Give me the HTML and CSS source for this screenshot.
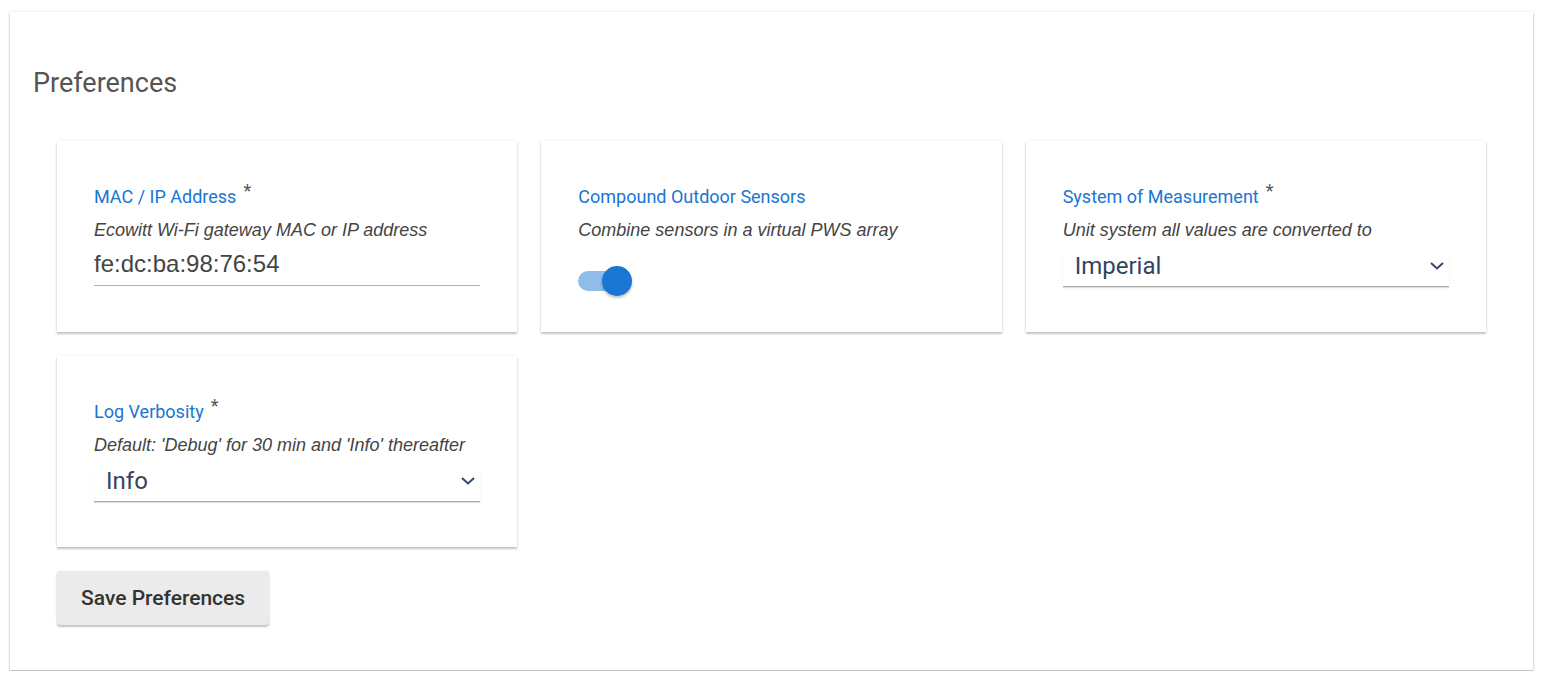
FILE: index.html
```html
<!DOCTYPE html>
<html lang="en">
<head>
<meta charset="utf-8">
<title>Preferences</title>
<link rel="stylesheet" href="styles.css">
</head>
<body>
<div class="panel">
  <h1 class="title">Preferences</h1>
  <div class="grid">
    <div class="card">
      <div class="label">MAC / IP Address<span class="req">*</span></div>
      <div class="desc">Ecowitt Wi-Fi gateway MAC or IP address</div>
      <div class="input">fe:dc:ba:98:76:54</div>
    </div>
    <div class="card">
      <div class="label">Compound Outdoor Sensors</div>
      <div class="desc">Combine sensors in a virtual PWS array</div>
      <div class="toggle"><span class="track"></span><span class="thumb"></span></div>
    </div>
    <div class="card">
      <div class="label">System of Measurement<span class="req">*</span></div>
      <div class="desc">Unit system all values are converted to</div>
      <div class="select"><span class="value">Imperial</span>
        <svg class="chev" width="16" height="10" viewBox="0 0 16 10"><path d="M2 2 L8 7.5 L14 2" fill="none" stroke="#34466a" stroke-width="2"/></svg>
      </div>
    </div>
    <div class="card">
      <div class="label">Log Verbosity<span class="req">*</span></div>
      <div class="desc">Default: 'Debug' for 30 min and 'Info' thereafter</div>
      <div class="select"><span class="value">Info</span>
        <svg class="chev" width="16" height="10" viewBox="0 0 16 10"><path d="M2 2 L8 7.5 L14 2" fill="none" stroke="#34466a" stroke-width="2"/></svg>
      </div>
    </div>
  </div>
  <button class="btn">Save Preferences</button>
</div>
</body>
</html>
```

FILE: styles.css
```css
html, body {
  margin: 0;
  padding: 0;
  background: #ffffff;
}
body {
  padding: 12px 13px 0 10px;
  font-family: Roboto, "Liberation Sans", Arial, sans-serif;
}
.panel {
  background: #fff;
  padding: 56px 23px 45px 23px;
  border-bottom: 1px solid #c4c4c4;
  box-shadow: 0 2px 2px rgba(0,0,0,0.25), 0 0 3px rgba(0,0,0,0.12);
}
.title {
  margin: 0 0 43px 0;
  font-family: Roboto, sans-serif;
  font-weight: 400;
  font-size: 27px;
  line-height: 30px;
  color: #555555;
}
.grid {
  margin: 0 24px;
  display: grid;
  grid-template-columns: repeat(3, 1fr);
  gap: 24px;
}
.card {
  background: #fff;
  padding: 45px 37px 45px 37px;
  box-shadow: 0 2px 2px rgba(0,0,0,0.22), 0 0 3px rgba(0,0,0,0.08);
}
.label {
  font-family: Roboto, sans-serif;
  font-size: 18px;
  line-height: 22px;
  color: #1976d2;
}
.req {
  color: #555;
  font-size: 18px;
  margin-left: 7px;
  position: relative;
  top: -6px;
}
.desc {
  margin-top: 12px;
  font-family: "Liberation Sans", Arial, sans-serif;
  font-style: italic;
  font-size: 18px;
  line-height: 21px;
  color: #444;
}
.input {
  margin-top: 9px;
  font-family: "Liberation Sans", Arial, sans-serif;
  font-size: 24px;
  line-height: 28px;
  color: #444;
  padding-bottom: 7px;
  border-bottom: 1px solid #b0b0b0;
}
.toggle {
  margin-top: 25px;
  margin-bottom: -10px;
  position: relative;
  width: 56px;
  height: 30px;
}
.track {
  position: absolute;
  left: 0;
  top: 5px;
  width: 40px;
  height: 20px;
  border-radius: 10px;
  background: #8fbce8;
}
.thumb {
  position: absolute;
  left: 24px;
  top: 0;
  width: 30px;
  height: 30px;
  border-radius: 50%;
  background: #1976d2;
  box-shadow: 0 2px 3px rgba(0,0,0,0.25);
}
.select {
  margin-top: 11px;
  display: flex;
  align-items: center;
  justify-content: space-between;
  padding: 0 4px 6px 12px;
  border-bottom: 1px solid #aaaaaa;
  box-shadow: 0 1px 1px rgba(0,0,0,0.12);
}
.value {
  font-family: Roboto, sans-serif;
  font-size: 24px;
  line-height: 28px;
  color: #34445f;
}
.chev {
  display: block;
}
.btn {
  display: block;
  margin: 24px 0 0 24px;
  height: 54px;
  padding: 0 24px;
  border: none;
  border-radius: 3px;
  background: #ebebeb;
  font-family: Roboto, sans-serif;
  font-weight: 500;
  font-size: 21px;
  color: #333;
  box-shadow: 0 2px 2px rgba(0,0,0,0.22), 0 0 2px rgba(0,0,0,0.08);
  cursor: pointer;
}
```
